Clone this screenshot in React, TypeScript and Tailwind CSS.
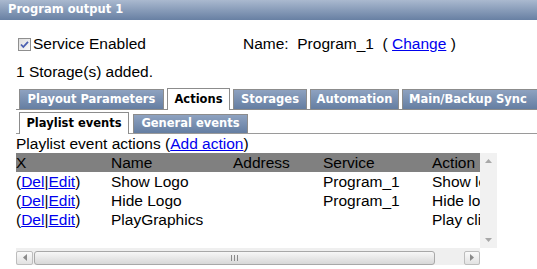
import React from "react";

const tabFont = "font-['DejaVu_Sans',Verdana,sans-serif] font-bold text-[11.5px]";

function MainTab({ label, width, selected }: { label: string; width: string; selected?: boolean }) {
  if (selected) {
    return (
      <div className={`${width} h-[22px] -mb-[1px] bg-white border border-b-0 border-[#8c8c8c] flex items-center justify-center text-black shrink-0 ${tabFont}`}>
        {label}
      </div>
    );
  }
  return (
    <div className={`${width} h-[20px] bg-gradient-to-b from-[#8ea2c0] to-[#657ea2] border border-b-0 border-[#8c8c8c] flex items-center justify-center text-white shrink-0 ${tabFont}`}>
      {label}
    </div>
  );
}

function Checkbox() {
  return (
    <svg width="13" height="13" viewBox="0 0 13 13">
      <defs>
        <linearGradient id="cb" x1="0" y1="0" x2="1" y2="1">
          <stop offset="0" stopColor="#dcdcdc" />
          <stop offset="1" stopColor="#fbfbfb" />
        </linearGradient>
      </defs>
      <rect x="0.5" y="0.5" width="12" height="12" fill="url(#cb)" stroke="#8f8f8f" />
      <path d="M3 6.5 L5.3 9 L10 3.8" fill="none" stroke="#4a5fb0" strokeWidth="1.8" />
    </svg>
  );
}

function DelEdit() {
  return (
    <span>
      (<a className="text-[#0000ee] underline">Del</a>|<a className="text-[#0000ee] underline">Edit</a>)
    </span>
  );
}

const rows = [
  { name: "Show Logo", service: "Program_1", action: "Show logo" },
  { name: "Hide Logo", service: "Program_1", action: "Hide logo" },
  { name: "PlayGraphics", service: "", action: "Play clip" },
];

export default function App() {
  return (
    <div className="w-[537px] h-[269px] bg-white overflow-hidden text-black font-['Liberation_Sans',Arial,sans-serif]">
      <div className={`h-[20px] pl-[8px] flex items-center text-white bg-gradient-to-b from-[#aab9cf] to-[#6880a3] ${tabFont}`}>
        Program output 1
      </div>

      <div className="pl-[16px] text-[15.5px]">
        <div className="mt-[14px] h-[20px] flex items-center">
          <div className="w-[227px] flex items-center">
            <span className="ml-[2px] mr-[2px] flex"><Checkbox /></span>
            Service Enabled
          </div>
          <div className="flex items-center whitespace-pre">
            Name:  Program_1  ( <a className="text-[#0000ee] underline">Change</a> )
          </div>
        </div>

        <div className="mt-[8px] h-[20px] flex items-center">1 Storage(s) added.</div>

        <div className="mt-[6px] h-[22px] flex items-end gap-[3px] pl-[3px] border-b border-[#8c8c8c]">
          <MainTab label="Playout Parameters" width="w-[145px]" />
          <MainTab label="Actions" width="w-[63px]" selected />
          <MainTab label="Storages" width="w-[74px]" />
          <MainTab label="Automation" width="w-[89px]" />
          <div className={`w-[145px] h-[20px] pl-[6px] bg-gradient-to-b from-[#8ea2c0] to-[#657ea2] border border-b-0 border-[#8c8c8c] flex items-center text-white shrink-0 whitespace-nowrap ${tabFont}`}>
            Main/Backup Sync
          </div>
        </div>

        <div className="mt-[2px] h-[22px] flex items-end gap-[4px] pl-[3px] border-b border-[#9a9a9a]">
          <MainTab label="Playlist events" width="w-[110px]" selected />
          <div className={`w-[115px] h-[19px] bg-gradient-to-b from-[#8ea2c0] to-[#657ea2] border border-b-0 border-[#8c8c8c] flex items-center justify-center text-white shrink-0 ${tabFont}`}>
            General events
          </div>
        </div>

        <div className="h-[19px] flex items-center">
          Playlist event actions (<a className="text-[#0000ee] underline">Add action</a>)
        </div>

        <div className="w-[481px] h-[112px] grid grid-cols-[464px_17px] grid-rows-[95px_17px]">
          <div className="overflow-hidden">
            <div className="w-[560px] leading-[19px]">
              <div className="h-[19px] bg-[#808080] flex">
                <div className="w-[95px]">X</div>
                <div className="w-[122px]">Name</div>
                <div className="w-[90px]">Address</div>
                <div className="w-[109px]">Service</div>
                <div className="w-[120px]">Action</div>
              </div>
              {rows.map((r) => (
                <div key={r.name} className="h-[19px] flex">
                  <div className="w-[95px]"><DelEdit /></div>
                  <div className="w-[122px]">{r.name}</div>
                  <div className="w-[90px]"></div>
                  <div className="w-[109px]">{r.service}</div>
                  <div className="w-[120px]">{r.action}</div>
                </div>
              ))}
            </div>
          </div>

          <div className="bg-[#f1f1f1] flex flex-col items-center justify-between py-[6px]">
            <svg width="7" height="4" viewBox="0 0 7 4"><path d="M0 4 L3.5 0 L7 4 Z" fill="#a8a8a8" /></svg>
            <svg width="7" height="4" viewBox="0 0 7 4"><path d="M0 0 L3.5 4 L7 0 Z" fill="#a8a8a8" /></svg>
          </div>

          <div className="bg-[#efefef] flex items-center pt-[2px]">
            <div className="w-[17px] h-[14px] border border-[#bdbdbd] rounded-[2px] bg-gradient-to-b from-[#fafafa] to-[#e2e2e2] flex items-center justify-center">
              <svg width="4" height="7" viewBox="0 0 4 7"><path d="M4 0 L0 3.5 L4 7 Z" fill="#8a8a8a" /></svg>
            </div>
            <div className="ml-[1px] w-[401px] h-[14px] border border-[#a8a8a8] rounded-[3px] bg-gradient-to-b from-[#f7f7f7] to-[#d8d8d8] flex items-center justify-center">
              <svg width="7" height="6" viewBox="0 0 7 6">
                <path d="M0.5 0 V6 M3.5 0 V6 M6.5 0 V6" stroke="#8a8a8a" strokeWidth="1" />
              </svg>
            </div>
            <div className="flex-1" />
            <div className="w-[16px] h-[14px] border border-[#bdbdbd] rounded-[2px] bg-gradient-to-b from-[#fafafa] to-[#e2e2e2] flex items-center justify-center">
              <svg width="4" height="7" viewBox="0 0 4 7"><path d="M0 0 L4 3.5 L0 7 Z" fill="#8a8a8a" /></svg>
            </div>
          </div>
          <div className="bg-white" />
        </div>
      </div>
    </div>
  );
}
